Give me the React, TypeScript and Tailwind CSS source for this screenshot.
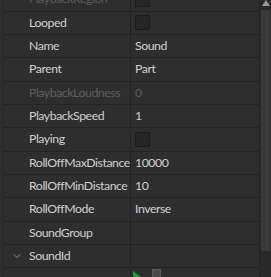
import { ChevronDown } from 'lucide-react';

type Row = { name: string; value?: string; check?: boolean; disabled?: boolean; expand?: boolean };

const rows: Row[] = [
  { name: 'PlaybackRegion', check: true },
  { name: 'Looped', check: true },
  { name: 'Name', value: 'Sound' },
  { name: 'Parent', value: 'Part' },
  { name: 'PlaybackLoudness', value: '0', disabled: true },
  { name: 'PlaybackSpeed', value: '1' },
  { name: 'Playing', check: true },
  { name: 'RollOffMaxDistance', value: '10000' },
  { name: 'RollOffMinDistance', value: '10' },
  { name: 'RollOffMode', value: 'Inverse' },
  { name: 'SoundGroup', value: '' },
  { name: 'SoundId', value: '', expand: true },
];

export default function App() {
  return (
    <div
      className="w-[271px] h-[277px] overflow-hidden bg-[#2e2e2e] flex text-[12.3px] tracking-[-0.45px] text-[#d0d0d0]"
      style={{ fontFamily: 'Lato, "Open Sans", sans-serif' }}
    >
      {/* Property grid */}
      <div className="w-[259px] border-l border-[#262626] ml-[3px] flex flex-col">
        <div className="-mt-[11.7px]">
          {rows.map((r, i) => (
            <div key={i} className="h-[23.33px] flex border-b border-[#232323]">
              <div className="w-[127px] border-r border-[#232323] flex items-center shrink-0 overflow-hidden">
                <div className="w-[25px] flex justify-center pl-[1px] shrink-0">
                  {r.expand && <ChevronDown size={12} strokeWidth={2} className="text-[#8a8a8a]" />}
                </div>
                <span className={`whitespace-nowrap ${i === 0 ? 'text-[#5a5a5a]' : r.disabled ? 'text-[#5f5f5f]' : ''}`}>
                  {r.name}
                </span>
              </div>
              <div className="flex-1 flex items-center pl-[4px]">
                {r.check ? (
                  <div className="w-[15px] h-[15px] bg-[#262626] border border-[#1c1c1c]" />
                ) : (
                  <span className={r.disabled ? 'text-[#5f5f5f]' : ''}>{r.value}</span>
                )}
              </div>
            </div>
          ))}
          {/* SoundId sub row */}
          <div className="h-[23px] flex">
            <div className="w-[127px] border-r border-[#232323] shrink-0" />
            <div className="flex-1 flex items-start gap-[10px] pl-[1px] pt-[1px]">
              <svg width="10" height="9" viewBox="0 0 10 9" className="mt-[2px]">
                <path d="M1 0 L9 6 L1 9 Z" fill="#1f9a2e" />
              </svg>
              <div className="w-[9px] h-[12px] bg-[#4a4a4a] border border-[#5a5a5a]" />
            </div>
          </div>
        </div>
      </div>
      {/* Scrollbar */}
      <div className="w-[12px] flex flex-col bg-[#292929] border-l border-[#242424]">
        <div className="h-[10px] flex items-start justify-center">
          <svg width="8" height="6" viewBox="0 0 8 6">
            <path d="M4 0 L8 6 L0 6 Z" fill="#9a9a9a" />
          </svg>
        </div>
        <div className="h-[241px] bg-[#3a3a3a] mx-[1px]" />
      </div>
    </div>
  );
}
